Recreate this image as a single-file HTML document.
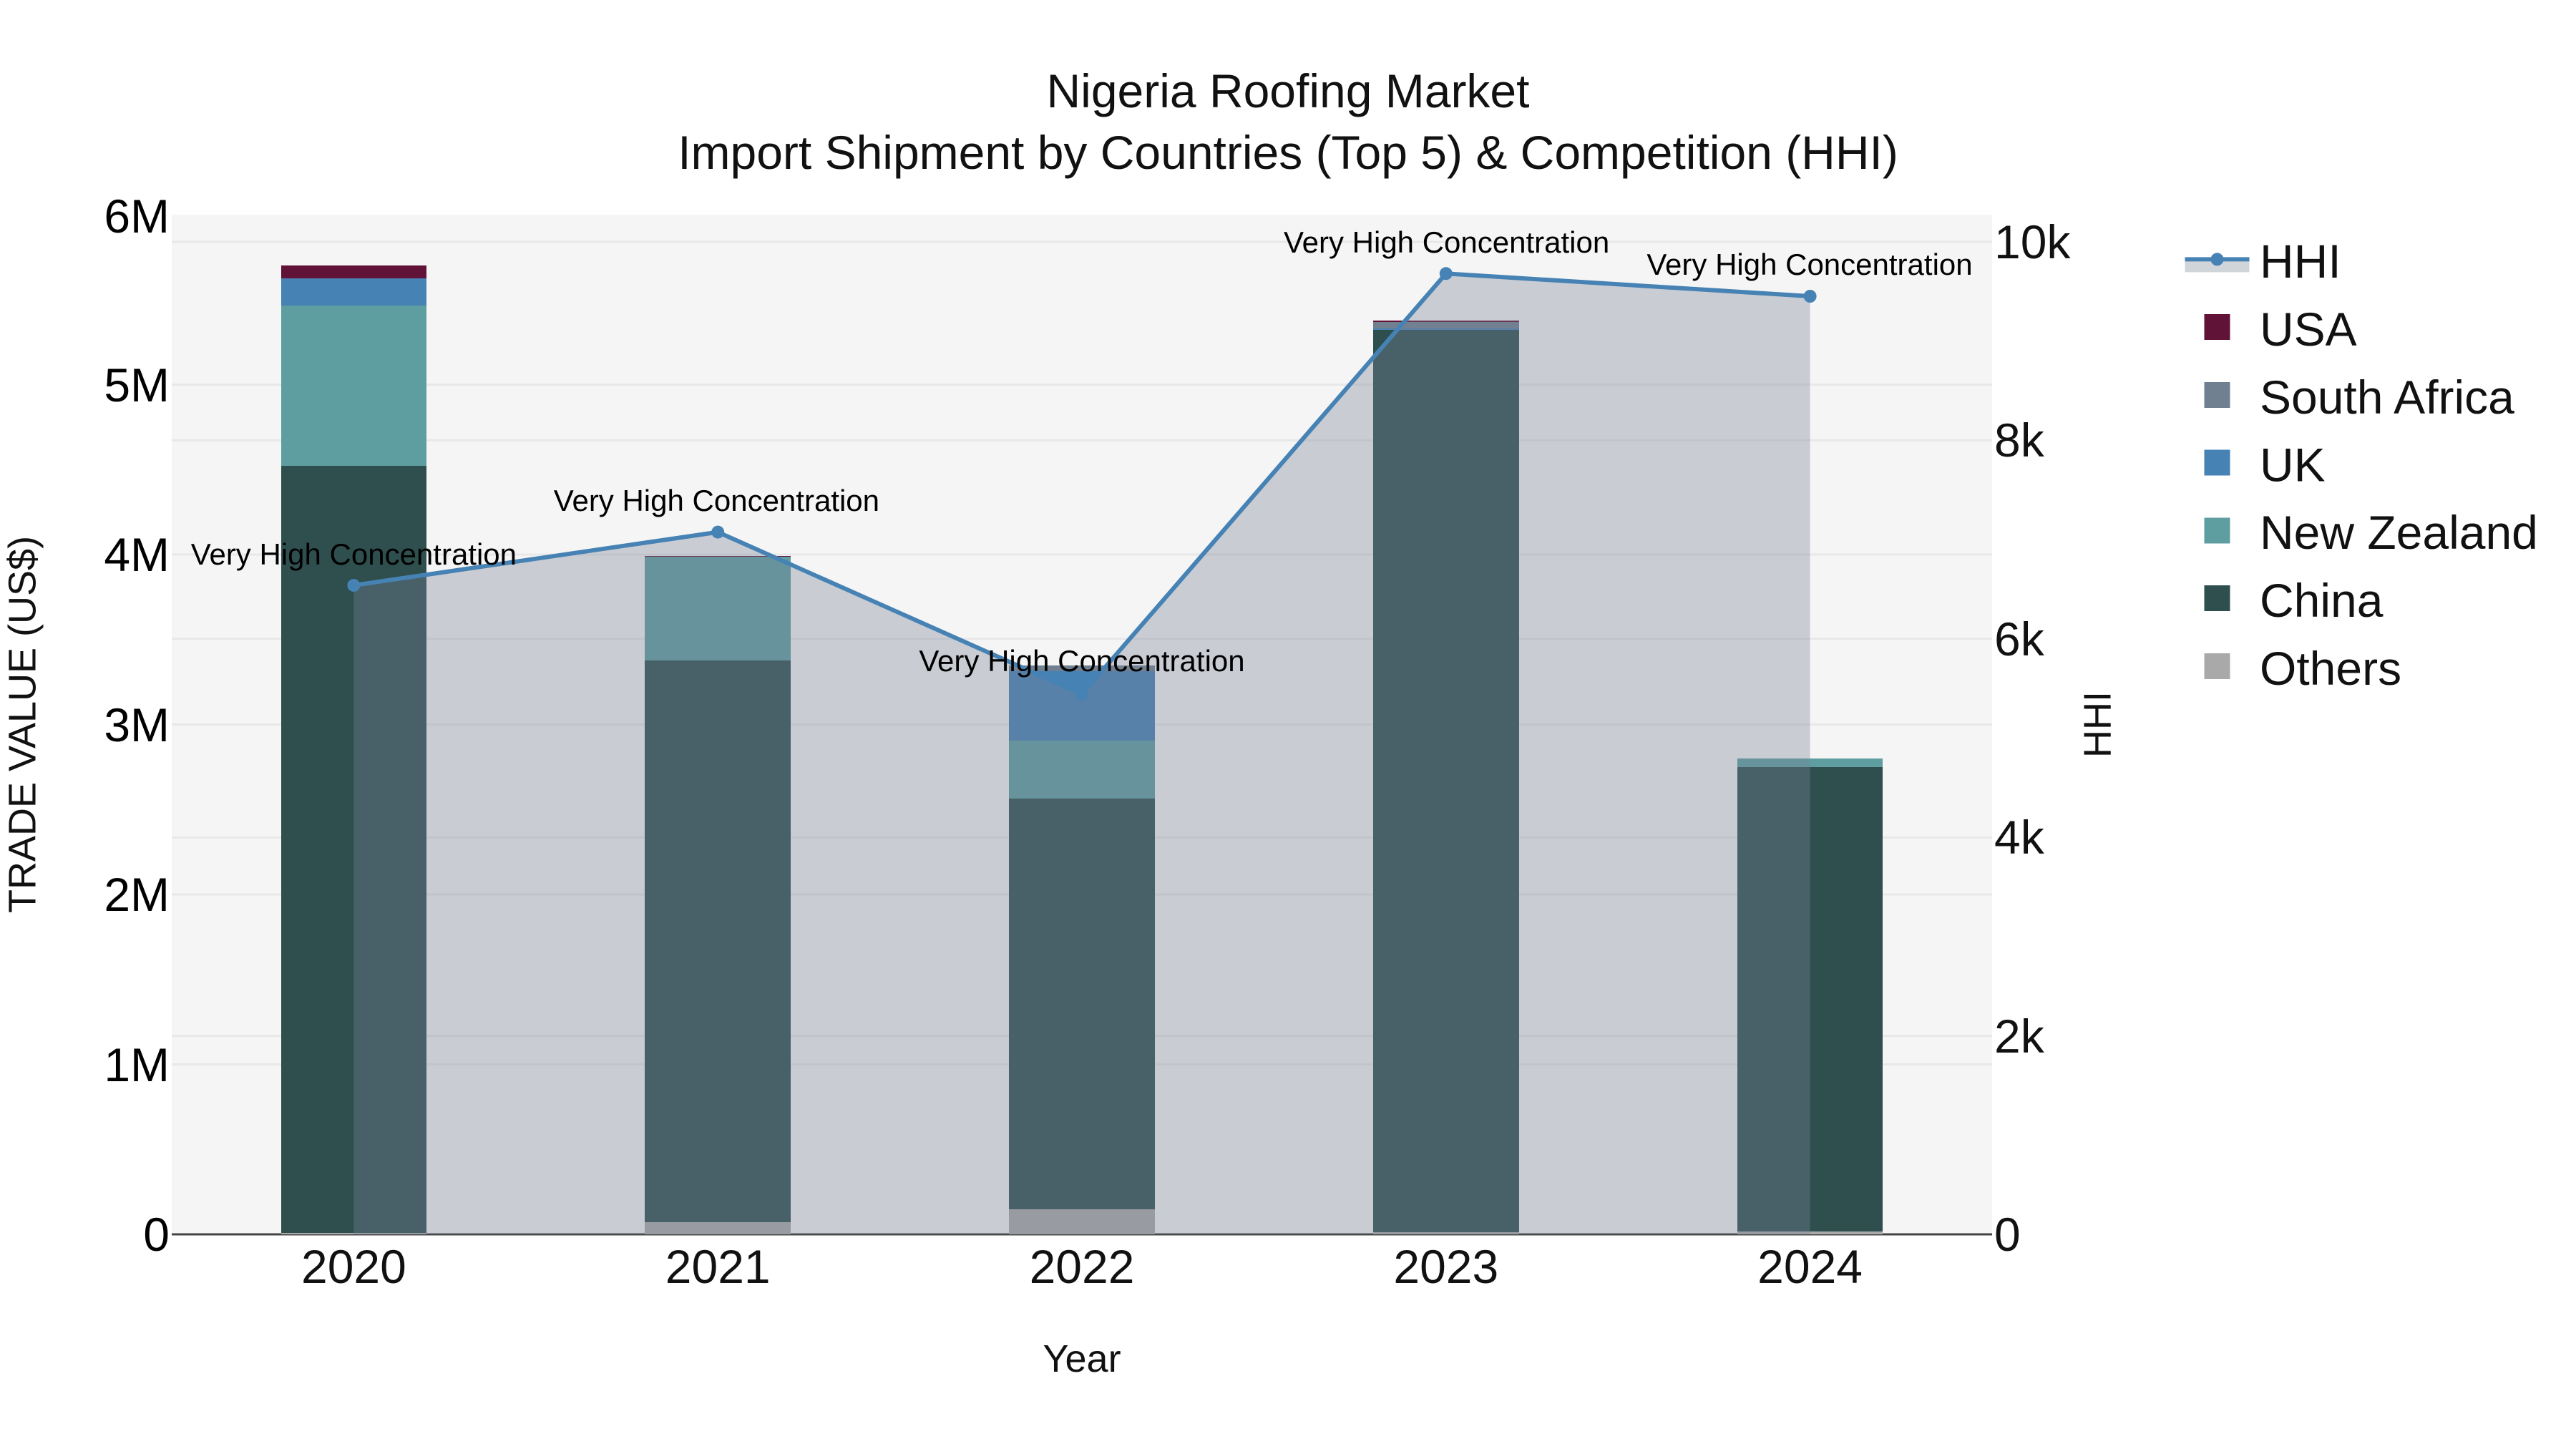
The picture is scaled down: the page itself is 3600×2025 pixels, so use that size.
<!DOCTYPE html>
<html lang="en">
<head>
<meta charset="utf-8">
<title>Nigeria Roofing Market</title>
<style>
html,body{margin:0;padding:0;background:#fff;width:3600px;height:2025px;overflow:hidden}
svg{display:block;position:absolute;left:0;top:0}
text{font-family:"Liberation Sans",Arial,sans-serif;white-space:pre}
.t{font-size:66px;fill:#111}
.k{font-size:66px;fill:#000}
.a{font-size:54px;fill:#111}
.n{font-size:42px;fill:#000;text-anchor:middle}
</style>
</head>
<body>
<svg xmlns="http://www.w3.org/2000/svg" width="3600" height="2025" viewBox="0 0 3600 2025">
<rect width="3600" height="2025" fill="#fff"/>
<rect x="240" y="300" width="2544" height="1425" fill="#f5f5f5"/>
<g stroke="#e8e8e8" stroke-width="3">
<line x1="240" x2="2784" y1="537.5" y2="537.5"/>
<line x1="240" x2="2784" y1="775" y2="775"/>
<line x1="240" x2="2784" y1="1012.5" y2="1012.5"/>
<line x1="240" x2="2784" y1="1250" y2="1250"/>
<line x1="240" x2="2784" y1="1487.5" y2="1487.5"/>
<line x1="240" x2="2784" y1="338" y2="338"/>
<line x1="240" x2="2784" y1="615.4" y2="615.4"/>
<line x1="240" x2="2784" y1="892.8" y2="892.8"/>
<line x1="240" x2="2784" y1="1170.2" y2="1170.2"/>
<line x1="240" x2="2784" y1="1447.6" y2="1447.6"/>
</g>
<line x1="240" x2="2784" y1="1725" y2="1725" stroke="#444" stroke-width="3"/>
<g shape-rendering="crispEdges">
<rect x="393" width="203" y="371" height="18" fill="#611237"/>
<rect x="393" width="203" y="389" height="38" fill="#4682b4"/>
<rect x="393" width="203" y="427" height="224" fill="#5f9ea0"/>
<rect x="393" width="203" y="651" height="1072" fill="#2f4f4f"/>
<rect x="393" width="203" y="1723" height="2" fill="#a9a9a9"/>

<rect x="901" width="204" y="777" height="1" fill="#611237"/>
<rect x="901" width="204" y="778" height="145" fill="#5f9ea0"/>
<rect x="901" width="204" y="923" height="785" fill="#2f4f4f"/>
<rect x="901" width="204" y="1708" height="17" fill="#a9a9a9"/>

<rect x="1410" width="204" y="930" height="8" fill="#708090"/>
<rect x="1410" width="204" y="938" height="97" fill="#4682b4"/>
<rect x="1410" width="204" y="1035" height="81" fill="#5f9ea0"/>
<rect x="1410" width="204" y="1116" height="574" fill="#2f4f4f"/>
<rect x="1410" width="204" y="1690" height="35" fill="#a9a9a9"/>

<rect x="1919" width="204" y="448" height="2" fill="#611237"/>
<rect x="1919" width="204" y="450" height="9" fill="#708090"/>
<rect x="1919" width="204" y="459" height="2" fill="#4682b4"/>
<rect x="1919" width="204" y="461" height="1261" fill="#2f4f4f"/>
<rect x="1919" width="204" y="1722" height="3" fill="#a9a9a9"/>

<rect x="2428" width="203" y="1060" height="12" fill="#5f9ea0"/>
<rect x="2428" width="203" y="1072" height="649" fill="#2f4f4f"/>
<rect x="2428" width="203" y="1721" height="4" fill="#a9a9a9"/>
</g>
<polygon points="494.4,818 1003.2,743.6 1512,970 2020.8,382.3 2529.6,414 2529.6,1725 494.4,1725" fill="rgb(120,130,150)" fill-opacity="0.35"/>
<polyline points="494.4,818 1003.2,743.6 1512,970 2020.8,382.3 2529.6,414" fill="none" stroke="#4682b4" stroke-width="6" stroke-linejoin="round"/>
<g fill="#4682b4">
<circle cx="494.4" cy="818" r="9"/>
<circle cx="1003.2" cy="743.6" r="9"/>
<circle cx="1512" cy="970" r="9"/>
<circle cx="2020.8" cy="382.3" r="9"/>
<circle cx="2529.6" cy="414" r="9"/>
</g>
<text class="n" x="494.4" y="789">Very High Concentration</text>
<text class="n" x="1001.4" y="714">Very High Concentration</text>
<text class="n" x="1512" y="938">Very High Concentration</text>
<text class="n" x="2021.6" y="353">Very High Concentration</text>
<text class="n" x="2529" y="384">Very High Concentration</text>

<g class="k" text-anchor="end">
<text class="k" x="237" y="325">6M</text>
<text class="k" x="237" y="561">5M</text>
<text class="k" x="237" y="798">4M</text>
<text class="k" x="237" y="1036">3M</text>
<text class="k" x="237" y="1273">2M</text>
<text class="k" x="237" y="1511">1M</text>
<text class="k" x="237" y="1748">0</text>
</g>
<g>
<text class="t" x="2787" y="361">10k</text>
<text class="t" x="2787" y="638">8k</text>
<text class="t" x="2787" y="916">6k</text>
<text class="t" x="2787" y="1193">4k</text>
<text class="t" x="2787" y="1471">2k</text>
<text class="t" x="2787" y="1748">0</text>
</g>
<g text-anchor="middle">
<text class="t" x="494.4" y="1793">2020</text>
<text class="t" x="1003.2" y="1793">2021</text>
<text class="t" x="1512" y="1793">2022</text>
<text class="t" x="2020.8" y="1793">2023</text>
<text class="t" x="2529.6" y="1793">2024</text>
<text class="a" x="1512" y="1917">Year</text>
<text class="a" transform="translate(49.7,1012.5) rotate(-90)">TRADE VALUE (US$)</text>
<text class="a" transform="translate(2949.5,1012.5) rotate(-90)">HHI</text>
<text class="t" x="1800" y="150">Nigeria Roofing Market</text>
<text class="t" x="1800" y="236">Import Shipment by Countries (Top 5) &amp; Competition (HHI)</text>
</g>

<rect x="3053.5" y="362.4" width="90" height="18" fill="#708090" fill-opacity="0.33"/>
<line x1="3053.5" x2="3143.5" y1="362.4" y2="362.4" stroke="#4682b4" stroke-width="6"/>
<circle cx="3098.5" cy="362.4" r="9" fill="#4682b4"/>
<g shape-rendering="crispEdges">
<rect x="3080.5" y="439" width="36" height="36" fill="#611237"/>
<rect x="3080.5" y="534" width="36" height="36" fill="#708090"/>
<rect x="3080.5" y="628.5" width="36" height="36" fill="#4682b4"/>
<rect x="3080.5" y="723.5" width="36" height="36" fill="#5f9ea0"/>
<rect x="3080.5" y="818" width="36" height="36" fill="#2f4f4f"/>
<rect x="3080.5" y="913" width="36" height="36" fill="#a9a9a9"/>
</g>
<text class="t" x="3158" y="388">HHI</text>
<text class="t" x="3158" y="483">USA</text>
<text class="t" x="3158" y="578">South Africa</text>
<text class="t" x="3158" y="672.5">UK</text>
<text class="t" x="3158" y="767">New Zealand</text>
<text class="t" x="3158" y="862">China</text>
<text class="t" x="3158" y="957">Others</text>
</svg>
</body>
</html>
